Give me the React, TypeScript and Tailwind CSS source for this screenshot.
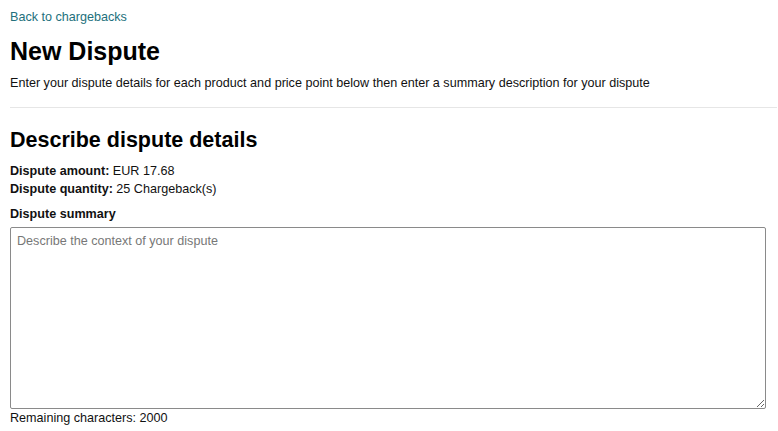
export default function App() {
    return (
        <div className="pl-[10px] pr-[1px] pt-[8px] text-[12.6px] text-[#111] font-['Liberation_Sans',Arial,sans-serif]">
            <a href="#" className="block leading-[18px] text-[#23707c]">
                Back to chargebacks
            </a>
            <h1 className="mt-[10px] text-[25px] font-bold leading-[30px] text-black">New Dispute</h1>
            <p className="mt-[9px] leading-[16px]">
                Enter your dispute details for each product and price point below then enter a summary description for your dispute
            </p>
            <hr className="mt-[16px] border-0 border-t border-[#e6e6e6]" />
            <h2 className="mt-[19px] text-[21.5px] font-bold leading-[26px] text-black">Describe dispute details</h2>
            <div className="mt-[9px] leading-[18px]">
                <div>
                    <span className="font-bold">Dispute amount:</span> EUR 17.68
                </div>
                <div>
                    <span className="font-bold">Dispute quantity:</span> 25 Chargeback(s)
                </div>
            </div>
            <label className="mt-[8px] block font-bold leading-[16px]">Dispute summary</label>
            <textarea
                className="mt-[5px] block h-[182px] w-[756px] rounded-[2px] border border-[#8a8a8a] px-[6px] py-[5px] text-[12.6px] leading-[16px] placeholder:text-[#777] focus:outline-none"
                placeholder="Describe the context of your dispute"
            />
            <div className="mt-[1px] leading-[16px]">Remaining characters: 2000</div>
        </div>
    );
}
